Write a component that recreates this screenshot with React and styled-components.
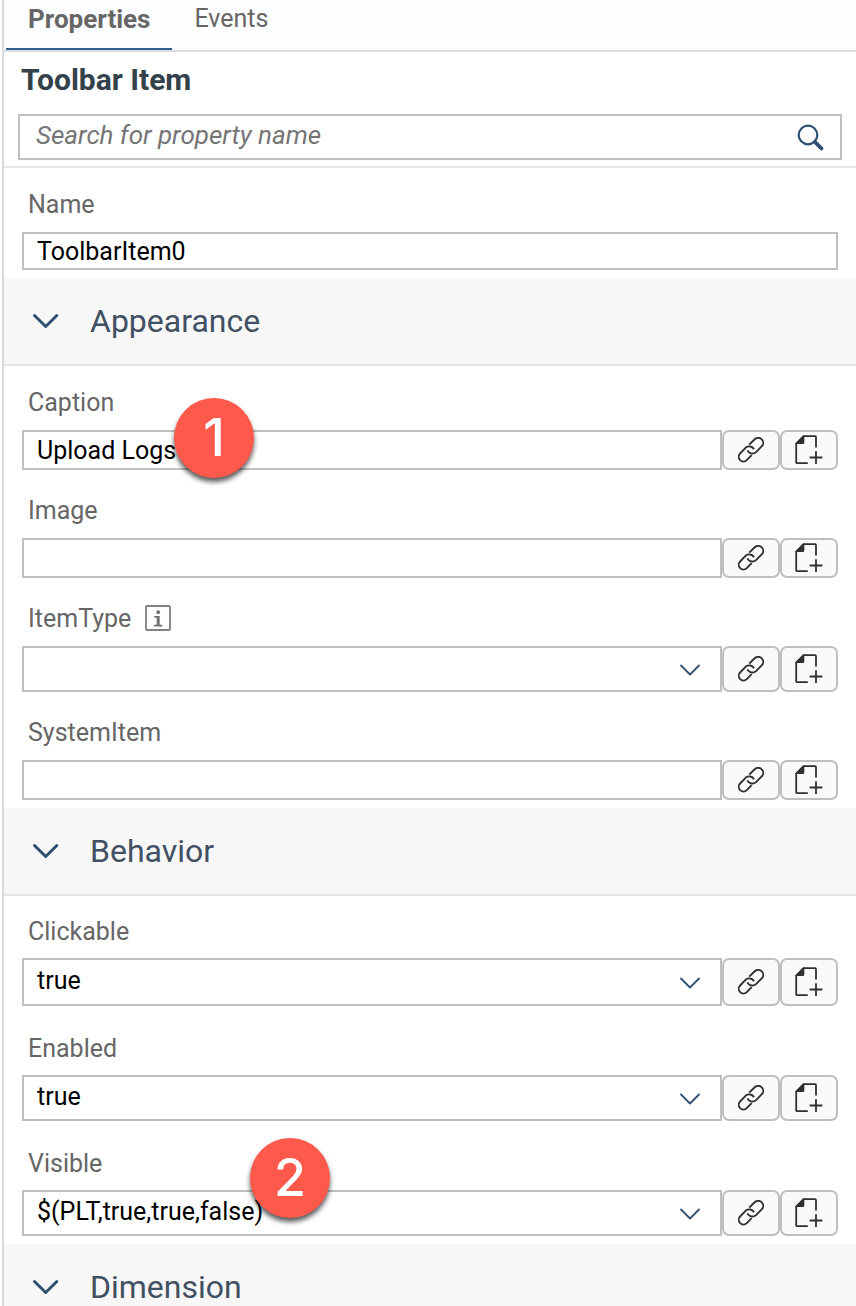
import React, { useId, useState } from "react";
import styled, { createGlobalStyle } from "styled-components";

const GlobalStyle = createGlobalStyle`
  *, *::before, *::after { box-sizing: border-box; }
  body { margin: 0; background: #ffffff; }
  body, button, input, select { font-family: Roboto, "Open Sans", sans-serif; font-size: 25px; }
`;

const Panel = styled.main`
  height: 100vh;
  margin-left: 2px;
  border-left: 2px solid #d9d9e0;
  overflow: hidden;
  background: #ffffff;
`;

const TabBar = styled.nav`
  display: flex;
  height: 52px;
  padding-left: 2px;
  background: #fcfdfe;
  border-bottom: 2px solid #d9dce0;
`;

const Tab = styled.button`
  height: 50px;
  padding: 0 22px 10px;
  border: 0;
  border-bottom: 2px solid ${(p) => (p.$active ? "#346187" : "transparent")};
  background: none;
  color: #666666;
  font-size: ${(p) => (p.$active ? 26 : 25)}px;
  line-height: 28px;
  font-weight: ${(p) => (p.$active ? 700 : 400)};
`;

const SearchHeader = styled.header`
  padding: 10px 14px 6px;
  border-bottom: 2px solid #e5e5e5;
`;

const Title = styled.h1`
  margin: 0 0 16px;
  padding-left: 3px;
  color: #32414a;
  font-size: 30px;
  line-height: 36px;
  font-weight: 700;
`;

const SearchBox = styled.div`
  display: flex;
  align-items: center;
  height: 46px;
  padding: 0 16px;
  border: 2px solid #bfbfbf;
`;

const SearchInput = styled.input`
  flex: 1;
  min-width: 0;
  padding: 0 0 4px;
  border: 0;
  outline: 0;
  background: none;
  color: #000000;
  font-size: 26px;
  &::placeholder { color: #757575; font-style: italic; opacity: 1; }
`;

const IconButton = styled.button`
  display: flex;
  padding: 0;
  border: 0;
  background: none;
  color: #2f5070;
`;

const LabelLine = styled.div`
  display: flex;
  align-items: center;
  gap: 14px;
  height: 60px;
  padding: 4px 6px 0;
  color: #666666;
`;

const Fields = styled.div`
  display: grid;
  row-gap: ${(p) => (p.$dense ? 11 : 8)}px;
  padding: 4px 18px 8px;
  ${LabelLine} { height: ${(p) => (p.$dense ? 58 : 60)}px; }
`;

const ControlRow = styled.div`
  position: relative;
  display: flex;
`;

const TextInput = styled.input`
  flex: 1;
  min-width: 0;
  height: ${(p) => (p.$compact ? 38 : 40)}px;
  padding: 0 13px;
  border: 2px solid #bfbfbf;
  border-radius: 0;
  outline: 0;
  background: #ffffff;
  color: #000000;
`;

const SelectWrap = styled.div`
  display: grid;
  flex: 1;
  align-items: center;
  min-width: 0;
  height: ${(p) => (p.$tall ? 48 : 46)}px;
  > * { grid-area: 1 / 1; }
  > svg { justify-self: end; margin-right: 21px; pointer-events: none; }
`;

const Select = styled.select`
  width: 100%;
  height: 100%;
  padding: 0 52px 4px 13px;
  border: 2px solid #bfbfbf;
  border-radius: 0;
  outline: 0;
  appearance: none;
  background: #ffffff;
  color: #000000;
`;

const ActionButton = styled.button`
  display: flex;
  align-items: center;
  justify-content: center;
  width: 58px;
  padding: 0;
  border: 2px solid #bfbfbf;
  border-radius: 7px;
  background: #f9fbfa;
  color: #303030;
`;

const SectionHeader = styled.button`
  display: flex;
  align-items: center;
  gap: 30px;
  width: 100%;
  height: 88px;
  padding: 0 28px;
  border: 0;
  border-bottom: 2px solid #e5e5e5;
  background: #f7f7f7;
  color: #2f5070;
`;

const SectionTitle = styled.span`
  color: #415062;
  font-size: 32px;
  line-height: 40px;
`;

const Badge = styled.span`
  position: absolute;
  left: ${(p) => p.$left}px;
  bottom: ${(p) => p.$bottom}px;
  display: flex;
  align-items: center;
  justify-content: center;
  width: 80px;
  height: 80px;
  border-radius: 50%;
  background: #ff594c;
  box-shadow: 0 4px 5px rgba(0, 0, 0, 0.65);
  color: #ffffff;
  font-family: Inter, sans-serif;
  font-size: 52px;
  font-weight: 500;
  line-height: 80px;
`;

const SearchIcon = () => (
  <svg width="28" height="28" viewBox="0 0 28 28" fill="none" stroke="currentColor" aria-hidden="true">
    <circle cx="12" cy="12" r="9.3" strokeWidth="2.2" />
    <path d="M18.8 18.8 25.4 25.4" strokeWidth="3.8" strokeLinecap="round" />
  </svg>
);

const SectionChevron = () => (
  <svg width="28" height="18" viewBox="0 0 28 18" fill="none" stroke="currentColor" strokeWidth="3" strokeLinecap="round" strokeLinejoin="round" aria-hidden="true">
    <path d="M2.5 3.5 13.7 14.5 24.8 3.5" />
  </svg>
);

const SelectChevron = () => (
  <svg width="22" height="14" viewBox="0 0 22 14" fill="none" stroke="#2f5070" strokeWidth="1.8" strokeLinecap="round" strokeLinejoin="round" aria-hidden="true">
    <path d="M2 3.5 11 12.5 20 3.5" />
  </svg>
);

const LinkIcon = () => (
  <svg width="26" height="26" viewBox="0 0 26 26" fill="none" stroke="currentColor" strokeWidth="1.9" aria-hidden="true">
    <path d="M11.2 7.6 16.4 2.5A4.6 4.6 0 0 1 23.9 9.2L18 15.1A5.4 5.4 0 0 1 9.4 13.4" />
    <path d="M13.6 18.2 8.8 23.1A4.6 4.6 0 0 1 2.1 16.5L7.8 10.6A5.4 5.4 0 0 1 16 12.2" />
  </svg>
);

const AddPageIcon = () => (
  <svg width="28" height="30" viewBox="0 0 28 30" fill="none" stroke="currentColor" strokeWidth="1.8" aria-hidden="true">
    <path d="M12.8 28.2H2.2Q1.2 28.2 1.2 27.2V8.5L8.5 1.2H20Q21 1.2 21 2.2V12.6" />
    <path d="M0.6 9V8.2L8 0.8H9.3V7.4Q9.3 9 7.8 9Z" fill="currentColor" stroke="none" />
    <path d="M21 16.2V28.9M14.6 22.5H27.4" />
  </svg>
);

const InfoIcon = () => (
  <svg width="26" height="26" viewBox="0 0 26 26" fill="none" role="img" aria-label="Information">
    <rect x="1" y="1" width="24" height="24" rx="1" stroke="#808080" strokeWidth="1.8" />
    <path d="M9.2 11H14.7V19.8H17.2V21.6H9V19.8H11.7V12.8H9.2Z" fill="#707070" />
    <circle cx="13.2" cy="7.2" r="1.9" fill="#707070" />
  </svg>
);

function PropertyField({ label, value = "", options, info, badge, plain, tall }) {
  const id = useId();
  const [current, setCurrent] = useState(value);
  const change = (e) => setCurrent(e.target.value);
  return (
    <div>
      <LabelLine>
        <label htmlFor={id}>{label}</label>
        {info && <InfoIcon />}
      </LabelLine>
      <ControlRow>
        {options ? (
          <SelectWrap $tall={tall}>
            <Select id={id} value={current} onChange={change}>
              {options.map((o) => <option key={o} value={o}>{o}</option>)}
            </Select>
            <SelectChevron />
          </SelectWrap>
        ) : (
          <TextInput id={id} value={current} onChange={change} $compact={plain} />
        )}
        {!plain && (
          <>
            <ActionButton type="button" aria-label={`Bind ${label}`}><LinkIcon /></ActionButton>
            <ActionButton type="button" aria-label={`Create for ${label}`}><AddPageIcon /></ActionButton>
          </>
        )}
        {badge && <Badge $left={badge.left} $bottom={badge.bottom}>{badge.text}</Badge>}
      </ControlRow>
    </div>
  );
}

function Section({ title, dense, children }) {
  const [open, setOpen] = useState(true);
  return (
    <section>
      <SectionHeader type="button" aria-expanded={open} onClick={() => setOpen(!open)}>
        <SectionChevron />
        <SectionTitle>{title}</SectionTitle>
      </SectionHeader>
      {open && children && <Fields $dense={dense}>{children}</Fields>}
    </section>
  );
}

export default function App() {
  return (
    <>
      <GlobalStyle />
      <Panel>
        <TabBar>
          <Tab type="button" $active>Properties</Tab>
          <Tab type="button">Events</Tab>
        </TabBar>
        <SearchHeader>
          <Title>Toolbar Item</Title>
          <SearchBox>
            <SearchInput type="text" placeholder="Search for property name" aria-label="Search for property name" />
            <IconButton type="button" aria-label="Search"><SearchIcon /></IconButton>
          </SearchBox>
        </SearchHeader>
        <Fields>
          <PropertyField label="Name" value="ToolbarItem0" plain />
        </Fields>
        <Section title="Appearance">
          <PropertyField label="Caption" value="Upload Logs" badge={{ text: "1", left: 152, bottom: -8 }} />
          <PropertyField label="Image" />
          <PropertyField label="ItemType" options={[""]} info />
          <PropertyField label="SystemItem" />
        </Section>
        <Section title="Behavior" dense>
          <PropertyField label="Clickable" value="true" options={["true", "false"]} tall />
          <PropertyField label="Enabled" value="true" options={["true", "false"]} />
          <PropertyField
            label="Visible"
            value="$(PLT,true,true,false)"
            options={["$(PLT,true,true,false)", "true", "false"]}
            badge={{ text: "2", left: 228, bottom: 18 }}
          />
        </Section>
        <Section title="Dimension" />
      </Panel>
    </>
  );
}
